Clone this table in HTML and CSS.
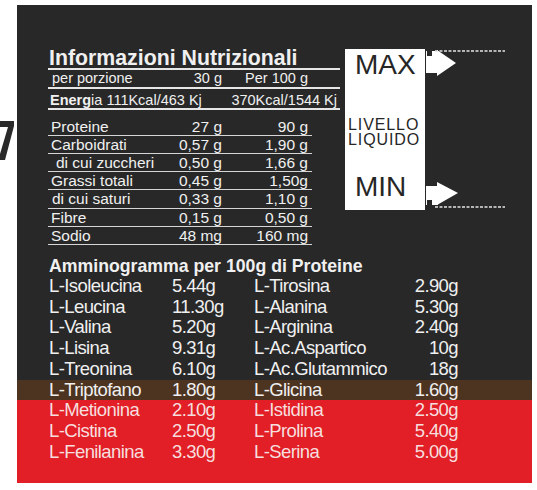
FILE: index.html
```html
<!DOCTYPE html>
<html lang="it">
  <head>
    <meta charset="UTF-8" />
    <meta name="viewport" content="width=device-width, initial-scale=1.0" />
    <title>Informazioni Nutrizionali</title>

    <link rel="stylesheet" href="styles.css">
  </head>
  <body>
    <svg class="edge-mark" width="16" height="40" viewBox="0 0 16 40">
      <polygon points="0,0 14,0 14,5 5,39 0,39 0,33 8,6 0,6" />
    </svg>

    <main class="label">
      <section class="top">
        <div class="nutri">
          <h1 class="title">Informazioni Nutrizionali</h1>
          <div class="head-row">
            <span>per porzione</span>
            <span>30 g</span>
            <span>Per 100 g</span>
          </div>
          <div class="energy-row">
            <span><b>Energ</b>ia 111Kcal/463 Kj</span>
            <span>370Kcal/1544 Kj</span>
          </div>
          <div class="facts">
            <div class="fact"><span>Proteine</span><span>27 g</span><span>90 g</span></div>
            <div class="fact"><span>Carboidrati</span><span>0,57 g</span><span>1,90 g</span></div>
            <div class="fact sub"><span>di cui zuccheri</span><span>0,50 g</span><span>1,66 g</span></div>
            <div class="fact"><span>Grassi totali</span><span>0,45 g</span><span>1,50g</span></div>
            <div class="fact sub-small"><span>di cui saturi</span><span>0,33 g</span><span>1,10 g</span></div>
            <div class="fact"><span>Fibre</span><span>0,15 g</span><span>0,50 g</span></div>
            <div class="fact"><span>Sodio</span><span>48 mg</span><span>160 mg</span></div>
          </div>
        </div>

        <div class="level">
          <div class="level-box">
            <span class="mark">MAX</span>
            <span class="level-text">LIVELLO</span>
            <span class="level-text">LIQUIDO</span>
            <span class="mark mark-min">MIN</span>
          </div>
          <svg class="arrows" width="80" height="161" viewBox="0 0 80 161">
            <g fill="#fff">
              <rect x="1" y="2" width="12" height="22" />
              <polygon points="12,1 31,14 12,27" />
              <rect x="1" y="137" width="12" height="19" />
              <polygon points="12,133 33,144 12,156" />
            </g>
            <g fill="#282828">
              <rect x="2" y="2" width="5" height="5" />
              <rect x="2" y="151" width="5" height="5" />
            </g>
            <g stroke="#e4e4e4" stroke-width="1.5" stroke-dasharray="3 1.5">
              <line x1="10" y1="2" x2="80" y2="2" />
              <line x1="10" y1="158" x2="80" y2="158" />
            </g>
          </svg>
        </div>
      </section>

      <section class="amino">
        <h2 class="amino-title">Amminogramma per 100g di Proteine</h2>
        <div class="amino-row"><span>L-Isoleucina</span><span>5.44g</span><span>L-Tirosina</span><span>2.90g</span></div>
        <div class="amino-row"><span>L-Leucina</span><span>11.30g</span><span>L-Alanina</span><span>5.30g</span></div>
        <div class="amino-row"><span>L-Valina</span><span>5.20g</span><span>L-Arginina</span><span>2.40g</span></div>
        <div class="amino-row"><span>L-Lisina</span><span>9.31g</span><span>L-Ac.Aspartico</span><span>10g</span></div>
        <div class="amino-row"><span>L-Treonina</span><span>6.10g</span><span>L-Ac.Glutammico</span><span>18g</span></div>
        <div class="amino-row brown"><span>L-Triptofano</span><span>1.80g</span><span>L-Glicina</span><span>1.60g</span></div>
        <div class="red">
          <div class="amino-row"><span>L-Metionina</span><span>2.10g</span><span>L-Istidina</span><span>2.50g</span></div>
          <div class="amino-row"><span>L-Cistina</span><span>2.50g</span><span>L-Prolina</span><span>5.40g</span></div>
          <div class="amino-row"><span>L-Fenilanina</span><span>3.30g</span><span>L-Serina</span><span>5.00g</span></div>
        </div>
      </section>
    </main>
  </body>
</html>
```

FILE: styles.css
```css
body {
  margin: 0;
  background-color: #fff;
  font-family: 'Liberation Sans', Arial, sans-serif;
}

/* bit of the next label peeking in at the left edge */
.edge-mark {
  position: absolute;
  top: 121px;
  left: 0;
  fill: #2a2a2a;
}

.label {
  margin: 5px 0 0 17px;
  width: 515px;
  height: 478px;
  display: flex;
  flex-direction: column;
  background-color: #282828;
  color: #f0f0f0;
}

.top {
  display: flex;
  align-items: flex-start;
  padding: 43px 0 0 31px;
}

.nutri {
  width: 292px;
}

.title {
  margin: 0;
  padding-left: 1px;
  font-size: 21.3px;
  line-height: 20px;
  border-bottom: 2px solid #e6e6e6;
}

.head-row {
  display: grid;
  grid-template-columns: 118px 56px 86px;
  font-size: 14.5px;
  line-height: 16px;
  padding-bottom: 1px;
  border-bottom: 2px solid #e6e6e6;
}

.head-row span:first-child {
  padding-left: 4px;
}

.head-row span + span {
  text-align: right;
}

.energy-row {
  display: flex;
  justify-content: space-between;
  font-size: 14.5px;
  line-height: 16px;
  padding: 3px 3px 0 2px;
  border-bottom: 2px solid #e6e6e6;
}

.facts {
  width: 264px;
  margin-top: 7.5px;
}

.fact {
  display: grid;
  grid-template-columns: 118px 56px 86px;
  font-size: 15.5px;
  line-height: 17.2px;
  border-bottom: 1px solid #d6d6d6;
}

.fact span:first-child {
  padding-left: 3px;
}

.fact span + span {
  text-align: right;
}

.fact.sub span:first-child {
  padding-left: 8px;
}

.fact.sub-small span:first-child {
  padding-left: 4px;
}

.level {
  display: flex;
  margin: 1px 0 0 5px;
}

.level-box {
  width: 80px;
  height: 161px;
  display: flex;
  flex-direction: column;
  align-items: flex-start;
  background-color: #fff;
  color: #262626;
}

.mark {
  margin: 2px 0 0 10px;
  font-size: 28px;
  line-height: 28px;
}

.mark-min {
  margin-top: 26px;
}

.level-text {
  margin-left: 3px;
  font-size: 16px;
  line-height: 15px;
  letter-spacing: 0.9px;
}

.mark + .level-text {
  margin-top: 38px;
}

.amino {
  flex: 1;
  display: flex;
  flex-direction: column;
}

.amino-title {
  margin: 0;
  padding: 11px 0 0 32px;
  font-size: 17.7px;
  line-height: 20px;
}

.amino-row {
  display: grid;
  grid-template-columns: 123px 82px 150px 54px;
  padding-left: 32px;
  font-size: 18.5px;
  line-height: 20.75px;
  letter-spacing: -0.6px;
}

.amino-row span:last-child {
  text-align: right;
}

.brown {
  background-color: #4d3421;
}

.red {
  flex: 1;
  background-color: #e21f26;
  color: #f6dede;
}
```
